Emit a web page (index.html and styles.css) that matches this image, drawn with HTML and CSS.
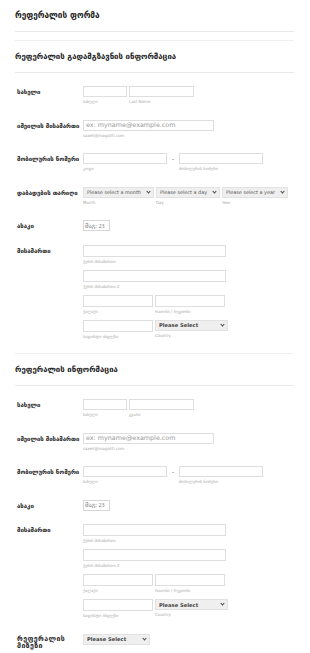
FILE: index.html
```html
<!DOCTYPE html>
<html lang="ka">
<head>
    <meta charset="UTF-8">
    <meta name="viewport" content="width=device-width, initial-scale=1.0">
    <title>რეფერალის ფორმა</title>
    <link rel="stylesheet" href="styles.css">
</head>
<body>
    <form class="form">
        <div class="form-title"><h2>რეფერალის ფორმა</h2></div>

        <div class="section-head"><h3>რეფერალის გადამგზავნის ინფორმაცია</h3></div>

        <div class="row">
            <label class="row-label">სახელი</label>
            <div class="field-line">
                <span class="sub"><input class="input w-first"><span class="sublabel">სახელი</span></span>
                <span class="sub"><input class="input w-last"><span class="sublabel">Last Name</span></span>
            </div>
        </div>

        <div class="row">
            <label class="row-label">იმეილის მისამართი</label>
            <div class="field-line">
                <span class="sub"><input class="input w-email" placeholder="ex: myname@example.com"><span class="sublabel">saxeli@magaliti.com</span></span>
            </div>
        </div>

        <div class="row">
            <label class="row-label">მობილურის ნომერი</label>
            <div class="field-line">
                <span class="sub"><input class="input w-phone"><span class="sublabel">კოდი</span></span>
                <span class="dash">-</span>
                <span class="sub"><input class="input w-phone"><span class="sublabel">მობილურის ნომერი</span></span>
            </div>
        </div>

        <div class="row">
            <label class="row-label">დაბადების თარიღი</label>
            <div class="field-line">
                <span class="sub">
                    <span class="select-wrap w-month"><select class="select"><option>Please select a month</option></select></span>
                    <span class="sublabel">Month</span>
                </span>
                <span class="sub">
                    <span class="select-wrap w-day"><select class="select"><option>Please select a day</option></select></span>
                    <span class="sublabel">Day</span>
                </span>
                <span class="sub">
                    <span class="select-wrap w-year"><select class="select"><option>Please select a year</option></select></span>
                    <span class="sublabel">Year</span>
                </span>
            </div>
        </div>

        <div class="row">
            <label class="row-label">ასაკი</label>
            <div class="field-line">
                <input class="input w-age" placeholder="მაგ: 23">
            </div>
        </div>

        <div class="row">
            <label class="row-label">მისამართი</label>
            <div class="address">
                <span class="sub"><input class="input w-street"><span class="sublabel">ქუჩის მისამართი</span></span>
                <span class="sub"><input class="input w-street"><span class="sublabel">ქუჩის მისამართი 2</span></span>
                <div class="field-line">
                    <span class="sub"><input class="input w-half"><span class="sublabel">ქალაქი</span></span>
                    <span class="sub"><input class="input w-half"><span class="sublabel">რაიონი / რეგიონი</span></span>
                </div>
                <div class="field-line">
                    <span class="sub"><input class="input w-half"><span class="sublabel">საფოსტო ინდექსი</span></span>
                    <span class="sub">
                        <span class="select-wrap w-country"><select class="select strong"><option>Please Select</option></select></span>
                        <span class="sublabel">Country</span>
                    </span>
                </div>
            </div>
        </div>

        <div class="section-head"><h3>რეფერალის ინფორმაცია</h3></div>

        <div class="row">
            <label class="row-label">სახელი</label>
            <div class="field-line">
                <span class="sub"><input class="input w-first"><span class="sublabel">სახელი</span></span>
                <span class="sub"><input class="input w-last"><span class="sublabel">გვარი</span></span>
            </div>
        </div>

        <div class="row">
            <label class="row-label">იმეილის მისამართი</label>
            <div class="field-line">
                <span class="sub"><input class="input w-email" placeholder="ex: myname@example.com"><span class="sublabel">saxeli@magaliti.com</span></span>
            </div>
        </div>

        <div class="row">
            <label class="row-label">მობილურის ნომერი</label>
            <div class="field-line">
                <span class="sub"><input class="input w-phone"><span class="sublabel">სახელი</span></span>
                <span class="dash">-</span>
                <span class="sub"><input class="input w-phone"><span class="sublabel">მობილურის ნომერი</span></span>
            </div>
        </div>

        <div class="row">
            <label class="row-label">ასაკი</label>
            <div class="field-line">
                <input class="input w-age" placeholder="მაგ: 23">
            </div>
        </div>

        <div class="row">
            <label class="row-label">მისამართი</label>
            <div class="address">
                <span class="sub"><input class="input w-street"><span class="sublabel">ქუჩის მისამართი</span></span>
                <span class="sub"><input class="input w-street"><span class="sublabel">ქუჩის მისამართი 2</span></span>
                <div class="field-line">
                    <span class="sub"><input class="input w-half"><span class="sublabel">ქალაქი</span></span>
                    <span class="sub"><input class="input w-half"><span class="sublabel">რაიონი / რეგიონი</span></span>
                </div>
                <div class="field-line">
                    <span class="sub"><input class="input w-half"><span class="sublabel">საფოსტო ინდექსი</span></span>
                    <span class="sub">
                        <span class="select-wrap w-country"><select class="select strong"><option>Please Select</option></select></span>
                        <span class="sublabel">Country</span>
                    </span>
                </div>
            </div>
        </div>

        <div class="row">
            <label class="row-label row-label-wide">რეფერალის მიზეზი</label>
            <div class="field-line">
                <span class="select-wrap w-reason"><select class="select strong"><option>Please Select</option></select></span>
            </div>
        </div>
    </form>
</body>
</html>
```

FILE: styles.css
```css
* {
    box-sizing: border-box;
}

body {
    margin: 0;
    background: #fff;
    font-family: "DejaVu Sans", Verdana, sans-serif;
    color: #2c3345;
}

.form {
    padding: 0 16px 0 15px;
}

.form-title {
    padding: 9px 0 10px;
    border-bottom: 1px solid #e8e8e8;
    margin-bottom: 8px;
}

.form-title h2 {
    margin: 0;
    font-size: 8.2px;
    line-height: 12px;
    font-weight: bold;
    color: #222;
}

.section-head {
    margin-top: 6px;
    margin-bottom: 6px;
    padding: 10px 0 9px;
    border-top: 1px solid #eee;
    border-bottom: 1px solid #e8e8e8;
}

.section-head h3 {
    margin: 0;
    font-size: 7.8px;
    line-height: 12px;
    font-weight: bold;
    color: #222;
}

.row {
    display: flex;
    align-items: flex-start;
    padding: 7px 0 6.5px 2px;
}

.row-label {
    flex: none;
    width: 66px;
    padding-top: 2px;
    font-size: 6px;
    line-height: 7px;
    font-weight: bold;
    color: #222;
}

.row-label-wide {
    padding-top: 2.5px;
    font-size: 7px;
    line-height: 6.5px;
    letter-spacing: 0.4px;
    color: #2a2a2a;
}

.field-line {
    display: flex;
    align-items: flex-start;
    gap: 2px;
}

.sub {
    display: flex;
    flex-direction: column;
}

.sublabel {
    margin: 2px 0 1px;
    font-size: 4px;
    line-height: 6px;
    color: #a8a8a8;
    white-space: nowrap;
}

.input {
    height: 11px;
    margin: 0;
    padding: 0 2px;
    border: 1px solid #dedede;
    border-radius: 0;
    background: #fff;
    font-family: "DejaVu Sans", Verdana, sans-serif;
    font-size: 6.4px;
    color: #333;
    outline: none;
}

.input::placeholder {
    color: #9a9a9a;
}

.w-first { width: 44px; }
.w-last { width: 65px; }
.w-email { width: 131px; }
.w-phone { width: 84px; }
.w-street { width: 143px; }
.w-half { width: 70px; }

.w-age {
    width: 27px;
    padding: 0 1px;
    border-color: #d6d6d6;
    font-family: "Liberation Serif", "DejaVu Serif", serif;
    font-size: 6px;
}

.w-age::placeholder {
    color: #777;
}

.dash {
    width: 8px;
    line-height: 11px;
    text-align: center;
    font-size: 6px;
    color: #555;
}

.address {
    display: flex;
    flex-direction: column;
}

.address .input {
    height: 12px;
}

.address .sub {
    margin-bottom: 4px;
}

.address > .field-line:last-child .sub {
    margin-bottom: 0;
}

.select-wrap {
    position: relative;
    display: block;
    height: 11px;
}

.select-wrap::after {
    content: "";
    position: absolute;
    top: 3px;
    right: 4px;
    width: 2px;
    height: 2px;
    border-right: 1px solid #444;
    border-bottom: 1px solid #444;
    transform: rotate(45deg);
    pointer-events: none;
}

.select {
    -webkit-appearance: none;
    appearance: none;
    display: block;
    width: 100%;
    height: 100%;
    margin: 0;
    padding: 0 7px 0 3px;
    border: 1px solid #e2e2e2;
    border-radius: 0;
    background: #efefef;
    font-family: "DejaVu Sans", Verdana, sans-serif;
    font-size: 4.9px;
    color: #555;
    outline: none;
}

.select.strong {
    font-size: 5.2px;
    font-weight: bold;
    color: #444;
}

.w-month { width: 71px; }
.w-day { width: 64px; }
.w-year { width: 66px; }
.w-country { width: 73px; }
.w-reason { width: 67px; }
```
